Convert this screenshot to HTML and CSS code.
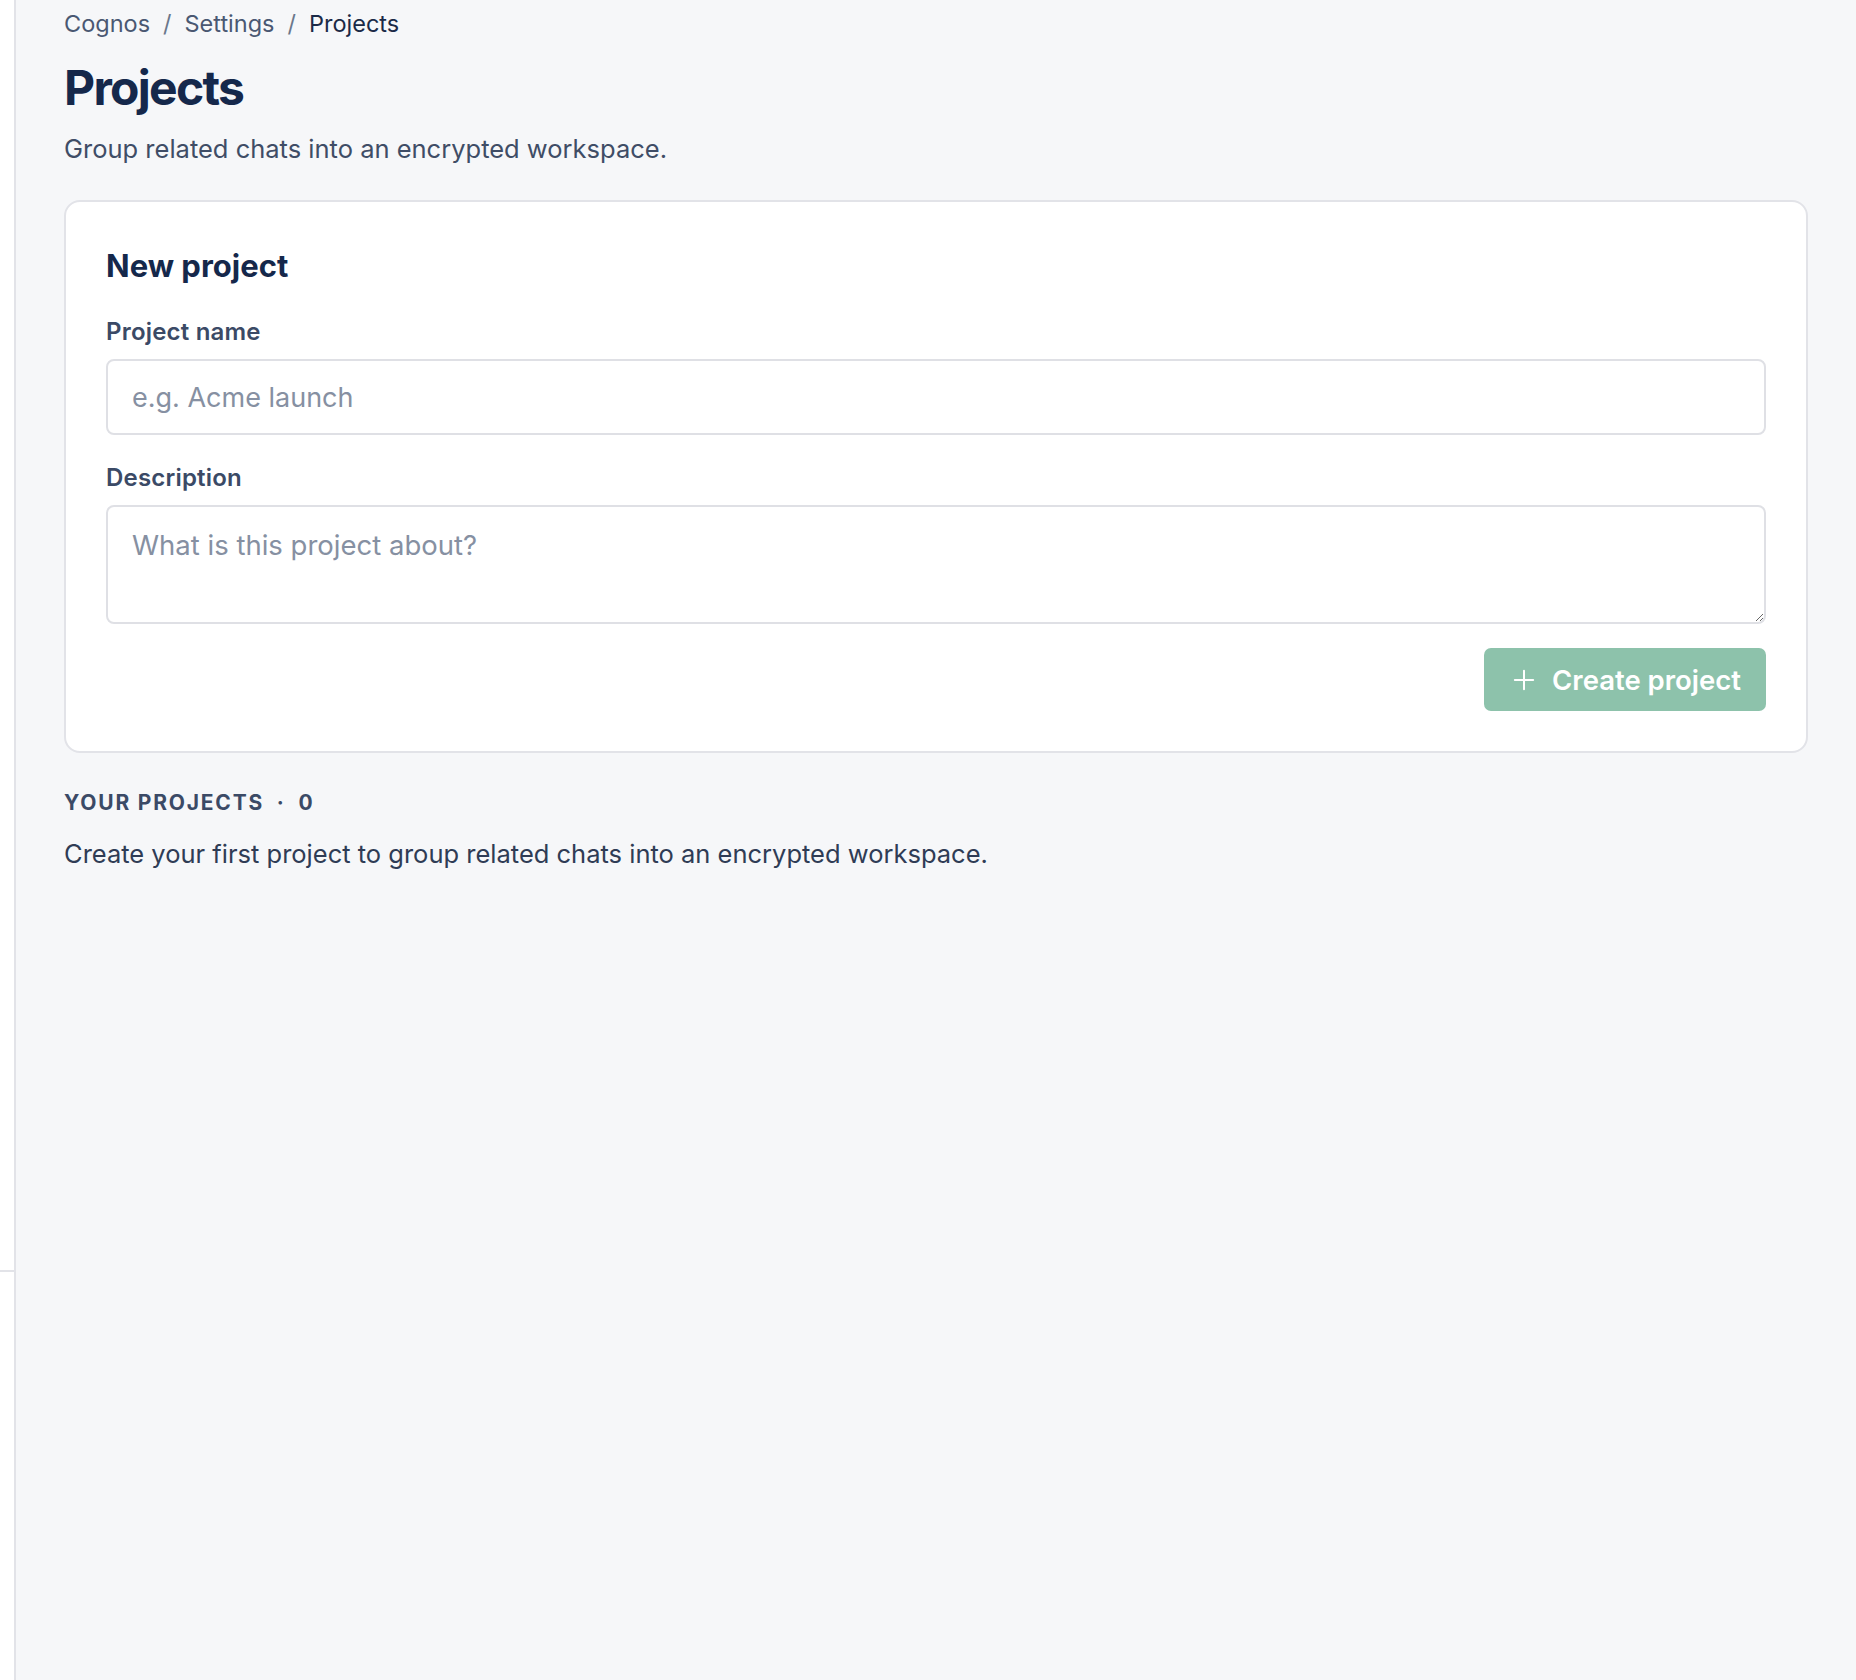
FILE: index.html
```html
<!DOCTYPE html>
<html lang="en">

<head>
    <meta charset="UTF-8">
    <meta name="viewport" content="width=device-width, initial-scale=1.0">
    <title>Projects - Cognos</title>
    <link rel="stylesheet" href="styles.css">
</head>

<body>
    <aside class="sidebar">
        <div class="sidebar-top"></div>
    </aside>

    <main class="main">
        <nav class="breadcrumb">
            <span class="crumb">Cognos</span>
            <span class="crumb-sep">/</span>
            <span class="crumb">Settings</span>
            <span class="crumb-sep">/</span>
            <span class="crumb current">Projects</span>
        </nav>

        <h1 class="page-title">Projects</h1>
        <p class="page-subtitle">Group related chats into an encrypted workspace.</p>

        <section class="card">
            <h2 class="card-title">New project</h2>

            <label class="field-label" for="projectName">Project name</label>
            <input class="field-input" id="projectName" type="text" placeholder="e.g. Acme launch">

            <label class="field-label desc-label" for="projectDesc">Description</label>
            <textarea class="field-input field-textarea" id="projectDesc" placeholder="What is this project about?"></textarea>

            <div class="card-actions">
                <button class="btn-create" type="button" disabled>
                    <svg class="btn-icon" viewBox="0 0 24 24" width="22" height="22" fill="none" stroke="currentColor" stroke-width="2.2" stroke-linecap="round">
                        <path d="M12 2v20M2 12h20" />
                    </svg>
                    <span>Create project</span>
                </button>
            </div>
        </section>

        <h3 class="section-heading">Your projects <span class="dot">&middot;</span> 0</h3>
        <p class="empty-text">Create your first project to group related chats into an encrypted workspace.</p>
    </main>
</body>

</html>
```

FILE: styles.css
```css
body {
    margin: 0;
    font-family: Inter, "Noto Sans", Arial, sans-serif;
    background-color: #f6f7f9;
    display: flex;
    min-height: 100vh;
}

.sidebar {
    width: 14px;
    background-color: #ffffff;
    border-right: 2px solid #e2e3e8;
    flex-shrink: 0;
}

.sidebar-top {
    height: 1270px;
    border-bottom: 2px solid #e2e3e8;
}

.main {
    flex: 1;
    padding: 8px 48px 40px 48px;
}

.breadcrumb {
    font-size: 23.5px;
    line-height: 32px;
    color: #4a5872;
    display: flex;
    gap: 13px;
}

.crumb.current {
    color: #1b2a47;
}

.crumb-sep {
    color: #6b778c;
}

.page-title {
    font-size: 48px;
    line-height: 56px;
    font-weight: 700;
    color: #15284b;
    margin: 20px 0 0 0;
    letter-spacing: -1.7px;
}

.page-subtitle {
    font-size: 25.5px;
    line-height: 36px;
    color: #3f4d66;
    margin: 15px 0 0 0;
}

.card {
    margin-top: 33px;
    background-color: #ffffff;
    border: 2px solid #e2e3e8;
    border-radius: 16px;
    padding: 41px 40px 40px 40px;
    display: flex;
    flex-direction: column;
}

.card-title {
    font-size: 31px;
    line-height: 46px;
    font-weight: 700;
    color: #15284b;
    margin: 0;
}

.field-label {
    font-size: 24px;
    line-height: 32px;
    font-weight: 600;
    letter-spacing: 0.2px;
    color: #3b4a66;
    margin-top: 27px;
    margin-bottom: 11px;
}

.field-input {
    height: 76px;
    box-sizing: border-box;
    border: 2px solid #dfe0e5;
    border-radius: 8px;
    padding: 0 24px;
    font-family: inherit;
    font-size: 27px;
    color: #1b2a47;
    background-color: #ffffff;
    outline: none;
}

.field-input::placeholder {
    color: #8690a2;
}

.field-textarea {
    height: 119px;
    padding: 20px 24px 17px 24px;
    line-height: 36px;
    font-size: 27.5px;
    resize: vertical;
}

.card-actions {
    display: flex;
    justify-content: flex-end;
    margin-top: 24px;
}

.btn-create {
    display: flex;
    align-items: center;
    gap: 17px;
    height: 63px;
    padding: 0 25px 0 29px;
    border: none;
    border-radius: 7px;
    background-color: #8dc2ab;
    color: #ffffff;
    font-family: inherit;
    font-size: 27.5px;
    font-weight: 600;
}

.btn-icon {
    display: block;
}

.section-heading {
    font-size: 21px;
    line-height: 32px;
    font-weight: 700;
    letter-spacing: 1.8px;
    text-transform: uppercase;
    color: #3b4a66;
    margin: 34px 0 0 0;
}

.section-heading .dot {
    margin: 0 6px;
}

.empty-text {
    font-size: 25.5px;
    line-height: 36px;
    color: #2f3c55;
    margin: 17px 0 0 0;
}
```
